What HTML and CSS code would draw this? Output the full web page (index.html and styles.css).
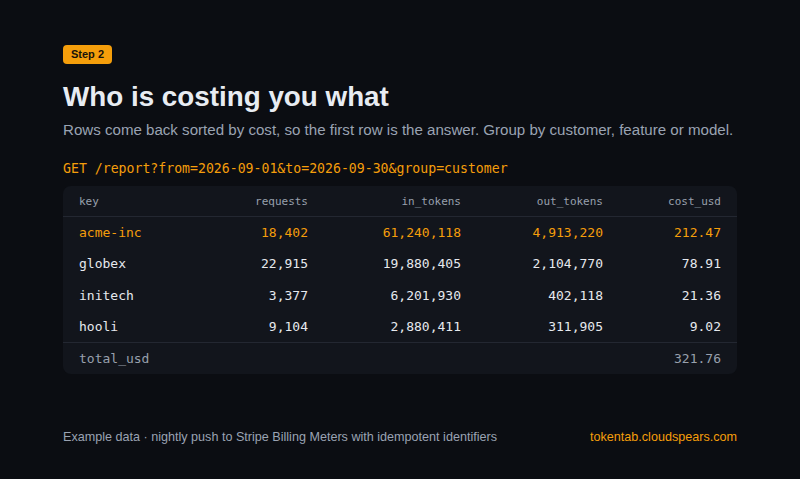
FILE: index.html
```html
<!DOCTYPE html>
<html>
<head>
<meta charset="utf-8">
<link rel="stylesheet" href="styles.css">
</head>
<body>
<main class="page">
  <span class="badge">Step 2</span>
  <h1 class="title">Who is costing you what</h1>
  <p class="lead">Rows come back sorted by cost, so the first row is the answer. Group by customer, feature or model.</p>
  <div class="req">GET /report?from=2026-09-01&amp;to=2026-09-30&amp;group=customer</div>
  <div class="table">
    <div class="row head"><span>key</span><span class="num">requests</span><span class="num">in_tokens</span><span class="num">out_tokens</span><span class="num">cost_usd</span></div>
    <div class="row hot"><span>acme-inc</span><span class="num">18,402</span><span class="num">61,240,118</span><span class="num">4,913,220</span><span class="num">212.47</span></div>
    <div class="row"><span>globex</span><span class="num">22,915</span><span class="num">19,880,405</span><span class="num">2,104,770</span><span class="num">78.91</span></div>
    <div class="row"><span>initech</span><span class="num">3,377</span><span class="num">6,201,930</span><span class="num">402,118</span><span class="num">21.36</span></div>
    <div class="row"><span>hooli</span><span class="num">9,104</span><span class="num">2,880,411</span><span class="num">311,905</span><span class="num">9.02</span></div>
    <div class="row total"><span>total_usd</span><span></span><span></span><span></span><span class="num">321.76</span></div>
  </div>
  <footer class="foot">
    <span>Example data · nightly push to Stripe Billing Meters with idempotent identifiers</span>
    <span class="link">tokentab.cloudspears.com</span>
  </footer>
</main>
</body>
</html>
```
FILE: styles.css
```css
* { box-sizing: border-box; }
html, body { margin: 0; padding: 0; }
body {
  background: #0b0d12;
  width: 800px;
  height: 479px;
  overflow: hidden;
  font-family: "Liberation Sans", Arial, sans-serif;
}
.page {
  padding: 45px 63px 0 63px;
  display: flex;
  flex-direction: column;
  align-items: flex-start;
}
.badge {
  background: #f59e0b;
  color: #17120a;
  font-weight: 700;
  font-size: 11px;
  line-height: 19px;
  height: 19px;
  padding: 0 8px;
  border-radius: 4px;
}
.title {
  margin: 17px 0 0 0;
  font-size: 27.8px;
  line-height: 32px;
  font-weight: 700;
  color: #e8ecf2;
}
.lead {
  margin: 7px 0 0 0;
  font-size: 15.1px;
  line-height: 20px;
  color: #9aa3b2;
}
.req {
  margin-top: 19px;
  font-family: "DejaVu Sans Mono", monospace;
  font-size: 13.2px;
  line-height: 20px;
  color: #f59e0b;
}
.table {
  margin-top: 7px;
  width: 674px;
  background: #12151c;
  border-radius: 8px;
  font-family: "DejaVu Sans Mono", monospace;
  font-size: 13px;
  color: #e6e9ee;
}
.row {
  display: grid;
  grid-template-columns: 1fr 120px 153px 142px 118px;
  padding: 0 16px;
  height: 31.3px;
  align-items: center;
}
.num { text-align: right; }
.head {
  font-size: 11px;
  color: #98a0ad;
  border-bottom: 1px solid #232731;
  height: 31px;
}
.hot { color: #f59e0b; }
.total {
  border-top: 1px solid #232731;
  height: 32px;
  color: #98a0ad;
}
.foot {
  margin-top: 55px;
  width: 674px;
  display: flex;
  justify-content: space-between;
  font-size: 12.6px;
  line-height: 16px;
  color: #9aa3b2;
}
.link { color: #f59e0b; }
```
